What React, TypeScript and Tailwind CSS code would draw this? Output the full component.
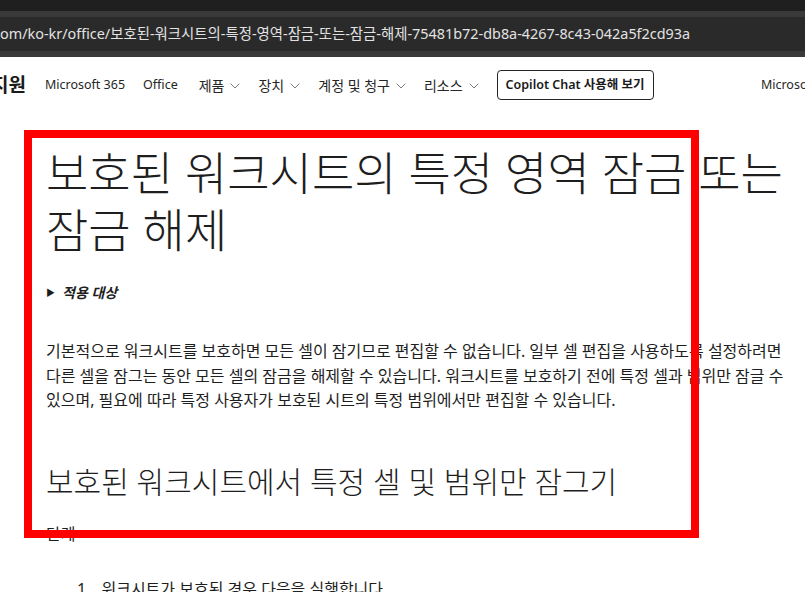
import { ChevronDown } from "lucide-react"

const sans = "font-[family-name:'Noto_Sans',_'Noto_Sans_CJK_KR',_sans-serif]"

function NavItem({ label, chevron, className = "" }: { label: string; chevron?: boolean; className?: string }) {
  return (
    <div className={`flex items-center gap-[3px] text-[#262626] ${chevron ? "text-[14px]" : "text-[12.5px]"} ${className}`}>
      <span>{label}</span>
      {chevron && <ChevronDown size={16} strokeWidth={1.2} className="text-[#5a5a5a] mt-[2px] mr-[-4px]" />}
    </div>
  )
}

export default function App() {
  return (
    <div className={`relative w-[805px] h-[592px] overflow-hidden bg-white ${sans}`}>
      {/* browser chrome */}
      <div className="h-[11px] bg-[#1f1f1f]" />
      <div className="bg-[#3a3a3a] py-[6px]">
        <div className="h-[34px] bg-[#2a2a2a] flex items-center whitespace-nowrap text-[14.4px] text-[#e2e2e2]">
          om/ko-kr/office/보호된-워크시트의-특정-영역-잠금-또는-잠금-해제-75481b72-db8a-4267-8c43-042a5f2cd93a
        </div>
      </div>

      {/* site header */}
      <div className="h-[56px] flex items-center whitespace-nowrap">
        <span className="ml-[-9px] text-[19px] font-bold text-[#1a1a1a]">지원</span>
        <div className="flex items-center ml-[19px] gap-[19px]">
          <NavItem label="Microsoft 365" />
          <NavItem label="Office" className="ml-[-1px]" />
          <NavItem label="제품" chevron className="ml-[2px]" />
          <NavItem label="장치" chevron />
          <NavItem label="계정 및 청구" chevron />
          <NavItem label="리소스" chevron />
          <button className="h-[30px] px-[8px] border border-[#262626] rounded-[4px] text-[12.5px] font-semibold text-[#1a1a1a]">
            Copilot Chat 사용해 보기
          </button>
        </div>
        <span className="ml-auto mr-[-36px] text-[12.5px] text-[#262626]">Microsoft 365</span>
      </div>

      {/* article */}
      <div className="pl-[46px] w-[805px] text-[#1e1e1e]">
        <h1 className="mt-[31px] text-[46px] leading-[57px] font-light whitespace-nowrap">
          보호된 워크시트의 특정 영역 잠금 또는
          <br />
          잠금 해제
        </h1>
        <div className="mt-[24px] flex items-center gap-[7px]">
          <span className="text-[9px] text-[#1a1a1a]">▶</span>
          <span className="text-[14px] font-bold italic">적용 대상</span>
        </div>
        <p className="mt-[36px] text-[16px] leading-[24.5px] whitespace-nowrap">
          기본적으로 워크시트를 보호하면 모든 셀이 잠기므로 편집할 수 없습니다. 일부 셀 편집을 사용하도록 설정하려면
          <br />
          다른 셀을 잠그는 동안 모든 셀의 잠금을 해제할 수 있습니다. 워크시트를 보호하기 전에 특정 셀과 범위만 잠글 수
          <br />
          있으며, 필요에 따라 특정 사용자가 보호된 시트의 특정 범위에서만 편집할 수 있습니다.
        </p>
        <h2 className="mt-[49px] text-[30px] leading-[40px] font-light">
          보호된 워크시트에서 특정 셀 및 범위만 잠그기
        </h2>
        <div className="mt-[20px] text-[16px] leading-[24px]">단계</div>
        <ol className="mt-[31px] ml-[31px] text-[16px] leading-[24px]">
          <li className="flex gap-[11px]">
            <span>1.</span>
            <span>워크시트가 보호된 경우 다음을 실행합니다.</span>
          </li>
        </ol>
      </div>

      {/* highlight box */}
      <div className="absolute left-[24px] top-[130px] w-[675px] h-[408px] border-[8px] border-[#ff0000]" />
    </div>
  )
}
